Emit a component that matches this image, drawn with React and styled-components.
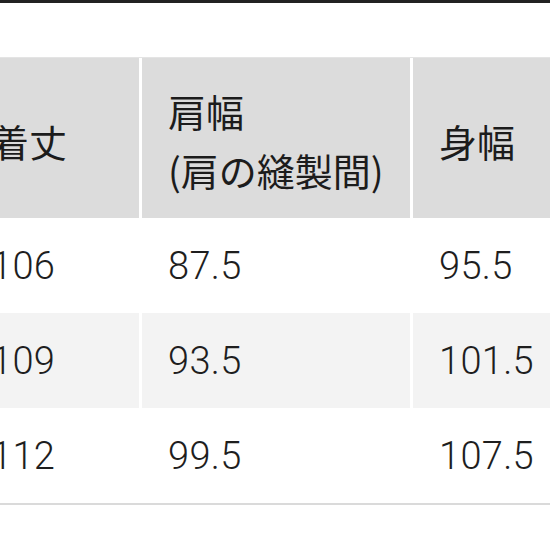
import React from "react";
import styled, { createGlobalStyle } from "styled-components";

const Global = createGlobalStyle`
  html, body { margin: 0; padding: 0; background: #ffffff; overflow: hidden; }
  body { width: 550px; height: 550px; }
`;

const Page = styled.div`
  width: 550px;
  height: 550px;
  overflow: hidden;
  background: #fff;
  display: flex;
  flex-direction: column;
`;

const TopBar = styled.div`
  height: 3px;
  background: #222222;
  flex: none;
`;

const Table = styled.div`
  margin-top: 54px;
  margin-left: -35px;
  width: 650px;
  display: grid;
  grid-template-columns: 174px 268px 205px;
  column-gap: 3px;
  border-top: 1px solid #e4e4e4;
  border-bottom: 2px solid #dadada;
`;

const HeadCell = styled.div`
  height: 160px;
  background: #dcdcdc;
  display: flex;
  align-items: center;
  padding-left: 26px;
  padding-top: 4px;
  box-sizing: border-box;
  font-family: "Noto Sans CJK JP", "Noto Sans", sans-serif;
  font-weight: 400;
  font-size: 38px;
  line-height: 59px;
  color: #1c1c1c;
  white-space: nowrap;
`;

const Cell = styled.div`
  height: 95px;
  background: ${(p) => (p.$shade ? "#f3f3f3" : "#ffffff")};
  display: flex;
  align-items: center;
  padding-left: 26px;
  box-sizing: border-box;
  font-family: Roboto, "Liberation Sans", sans-serif;
  font-weight: 300;
  font-size: 38px;
  color: #1e1e1e;
  letter-spacing: 0.3px;
`;

const rows = [
  ["106", "87.5", "95.5"],
  ["109", "93.5", "101.5"],
  ["112", "99.5", "107.5"],
];

export default function App() {
  return (
    <Page>
      <Global />
      <TopBar />
      <Table>
        <HeadCell>着丈</HeadCell>
        <HeadCell>
          <div>
            肩幅
            <br />
            (肩の縫製間)
          </div>
        </HeadCell>
        <HeadCell>身幅</HeadCell>
        {rows.map((r, i) =>
          r.map((v, j) => (
            <Cell key={`${i}-${j}`} $shade={i === 1}>
              {v}
            </Cell>
          ))
        )}
      </Table>
    </Page>
  );
}
